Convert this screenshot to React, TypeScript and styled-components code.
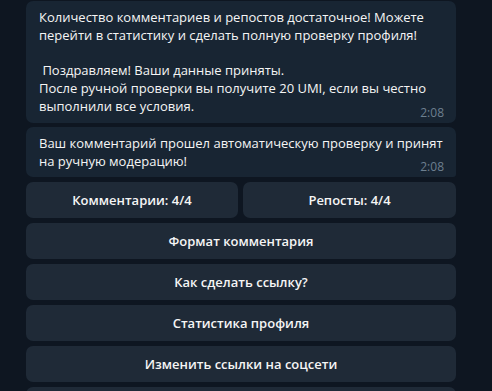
import React from "react";
import styled, { createGlobalStyle } from "styled-components";

const Global = createGlobalStyle`
  html, body {
    margin: 0;
    padding: 0;
    background: #0e1621;
    overflow: hidden;
  }
  body {
    font-family: "Open Sans", "Noto Sans", sans-serif;
  }
`;

const Chat = styled.div`
  width: 430px;
  padding: 1px 0 0 26px;
  display: flex;
  flex-direction: column;
  gap: 4px;
`;

const Bubble = styled.div<{ $tight?: boolean }>`
  position: relative;
  background: #182533;
  border-radius: 7px;
  ${(p) => (p.$tight ? "border-bottom-right-radius: 3px;" : "")}
  padding: 8px 13px 7px;
  color: #f5f5f5;
  font-size: 13px;
  line-height: 17.8px;
`;

const Line = styled.div`
  width: fit-content;
  min-height: 17.8px;
  white-space: pre;
`;

const Time = styled.span`
  position: absolute;
  right: 12px;
  bottom: 2px;
  font-size: 12px;
  line-height: 16px;
  color: #6d7f8f;
`;

const Keyboard = styled.div`
  margin-top: 1px;
  display: grid;
  grid-template-columns: 212px 213px;
  grid-auto-rows: 36px;
  gap: 5px;
`;

const KeyButton = styled.button<{ $wide?: boolean }>`
  grid-column: ${(p) => (p.$wide ? "1 / span 2" : "auto")};
  border: none;
  border-radius: 7px;
  background: #1f2a37;
  color: #f5f5f5;
  font-family: "Open Sans", "Noto Sans", sans-serif;
  font-weight: 600;
  font-size: 13px;
  padding: 0;
  display: flex;
  align-items: center;
  justify-content: center;
  cursor: pointer;
`;

function Message({ lines, time, tight }: { lines: string[]; time: string; tight?: boolean }) {
  return (
    <Bubble $tight={tight}>
      {lines.map((l, i) => (
        <Line key={i}>{l}</Line>
      ))}
      <Time>{time}</Time>
    </Bubble>
  );
}

export default function App() {
  return (
    <>
      <Global />
      <Chat>
        <Message
          time="2:08"
          lines={[
            "Количество комментариев и репостов достаточное! Можете",
            "перейти в статистику и сделать полную проверку профиля!",
            "",
            " Поздравляем! Ваши данные приняты.",
            "После ручной проверки вы получите 20 UMI, если вы честно",
            "выполнили все условия.",
          ]}
        />
        <Message
          tight
          time="2:08"
          lines={[
            "Ваш комментарий прошел автоматическую проверку и принят",
            "на ручную модерацию!",
          ]}
        />
        <Keyboard>
          <KeyButton>Комментарии: 4/4</KeyButton>
          <KeyButton>Репосты: 4/4</KeyButton>
          <KeyButton $wide>Формат комментария</KeyButton>
          <KeyButton $wide>Как сделать ссылку?</KeyButton>
          <KeyButton $wide>Статистика профиля</KeyButton>
          <KeyButton $wide>Изменить ссылки на соцсети</KeyButton>
          <KeyButton $wide aria-label="Главное меню" />
        </Keyboard>
      </Chat>
    </>
  );
}
